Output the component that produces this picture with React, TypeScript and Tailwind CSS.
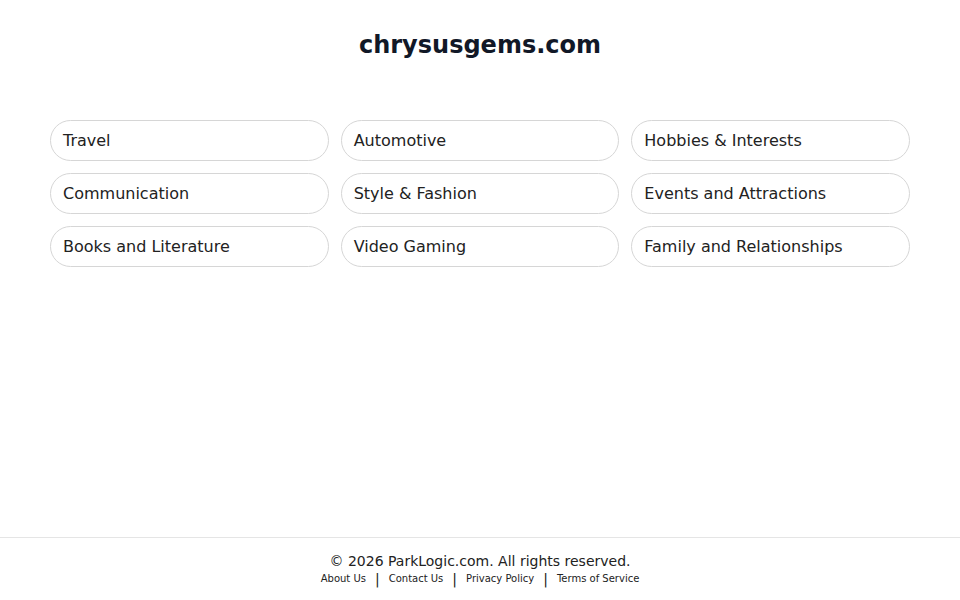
const categories = [
  "Travel",
  "Automotive",
  "Hobbies & Interests",
  "Communication",
  "Style & Fashion",
  "Events and Attractions",
  "Books and Literature",
  "Video Gaming",
  "Family and Relationships",
];

const links = ["About Us", "Contact Us", "Privacy Policy", "Terms of Service"];

export default function App() {
  return (
    <div className="min-h-screen flex flex-col bg-white text-[#1f1f1f] font-['DejaVu_Sans',sans-serif]">
      <main className="flex-1 px-[50px]">
        <h1 className="pt-[29px] text-center text-[24px] leading-8 font-bold text-[#111827]">
          chrysusgems.com
        </h1>
        <div className="mt-[59px] grid grid-cols-3 gap-x-3 gap-y-3">
          {categories.map((c) => (
            <a
              key={c}
              href="#"
              className="h-[41px] flex items-center rounded-full border border-[#d6d6d6] px-3 text-[16px] text-[#222]"
            >
              {c}
            </a>
          ))}
        </div>
      </main>

      <footer className="h-[63px] border-t border-[#e5e5e5] flex flex-col items-center pt-[13px]">
        <p className="text-[14px] leading-5 text-[#222]">
          © 2026 ParkLogic.com. All rights reserved.
        </p>
        <div className="flex items-center text-[10px] leading-4 text-[#222]">
          {links.map((l, i) => (
            <span key={l} className="flex items-center">
              {i > 0 && <span className="mx-[9px] text-[14px] leading-4">|</span>}
              <a href="#">{l}</a>
            </span>
          ))}
        </div>
      </footer>
    </div>
  );
}
